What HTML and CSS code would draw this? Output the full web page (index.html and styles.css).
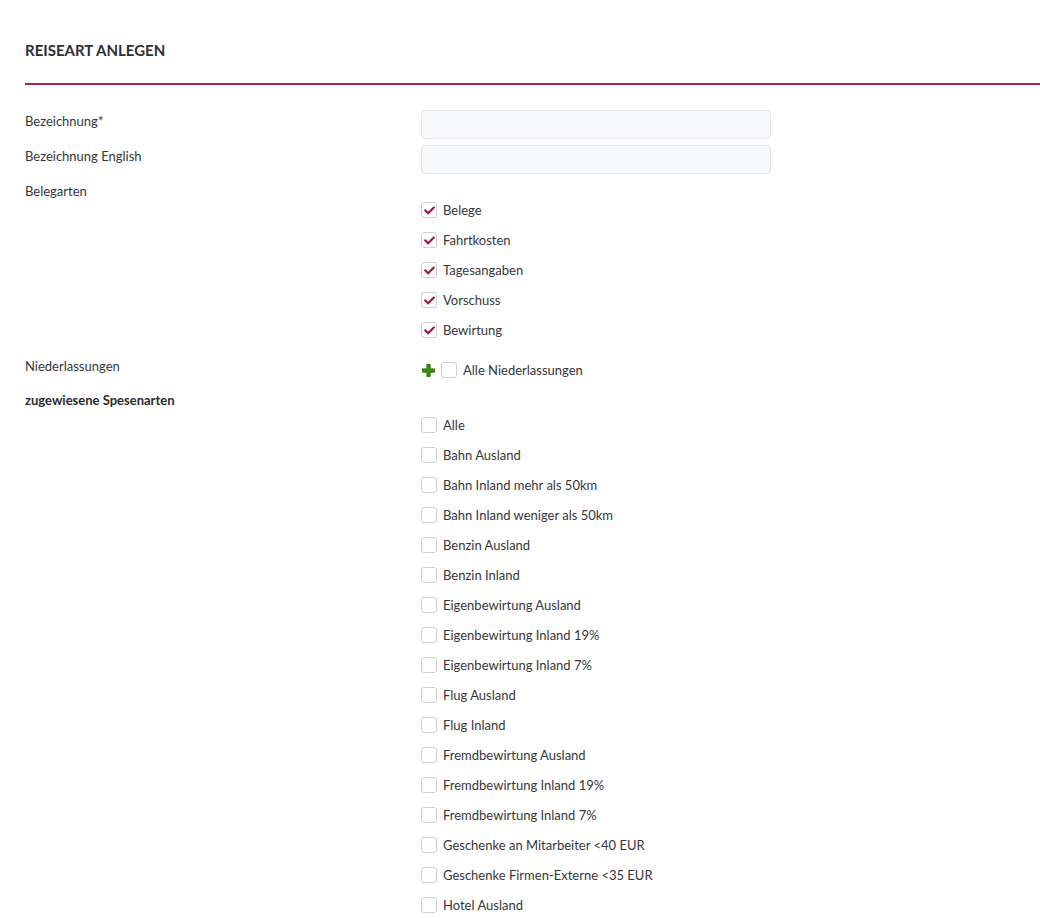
FILE: index.html
```html
<!DOCTYPE html>
<html lang="de">
<head>
<meta charset="utf-8">
<title>Reiseart anlegen</title>
<link rel="stylesheet" href="styles.css">
</head>
<body>
<div class="page">
  <header class="page-head">
    <h1 class="page-title">REISEART ANLEGEN</h1>
  </header>

  <form class="form">
    <div class="row">
      <label class="label">Bezeichnung*</label>
      <div class="field"><input class="input" type="text"></div>
    </div>
    <div class="row">
      <label class="label">Bezeichnung English</label>
      <div class="field"><input class="input" type="text"></div>
    </div>

    <div class="row row-group">
      <label class="label">Belegarten</label>
      <div class="field checks checks-belege">
        <div class="check"><span class="box checked"><svg viewBox="0 0 512 512"><path d="M173.9 439.4 7.5 273c-10-10-10-26.2 0-36.2l36.2-36.2c10-10 26.2-10 36.2 0L192 312.7 432.1 72.6c10-10 26.2-10 36.2 0l36.2 36.2c10 10 10 26.2 0 36.2L210.1 439.4c-10 10-26.2 10-36.2 0z"/></svg></span><span class="text">Belege</span></div>
        <div class="check"><span class="box checked"><svg viewBox="0 0 512 512"><path d="M173.9 439.4 7.5 273c-10-10-10-26.2 0-36.2l36.2-36.2c10-10 26.2-10 36.2 0L192 312.7 432.1 72.6c10-10 26.2-10 36.2 0l36.2 36.2c10 10 10 26.2 0 36.2L210.1 439.4c-10 10-26.2 10-36.2 0z"/></svg></span><span class="text">Fahrtkosten</span></div>
        <div class="check"><span class="box checked"><svg viewBox="0 0 512 512"><path d="M173.9 439.4 7.5 273c-10-10-10-26.2 0-36.2l36.2-36.2c10-10 26.2-10 36.2 0L192 312.7 432.1 72.6c10-10 26.2-10 36.2 0l36.2 36.2c10 10 10 26.2 0 36.2L210.1 439.4c-10 10-26.2 10-36.2 0z"/></svg></span><span class="text">Tagesangaben</span></div>
        <div class="check"><span class="box checked"><svg viewBox="0 0 512 512"><path d="M173.9 439.4 7.5 273c-10-10-10-26.2 0-36.2l36.2-36.2c10-10 26.2-10 36.2 0L192 312.7 432.1 72.6c10-10 26.2-10 36.2 0l36.2 36.2c10 10 10 26.2 0 36.2L210.1 439.4c-10 10-26.2 10-36.2 0z"/></svg></span><span class="text">Vorschuss</span></div>
        <div class="check"><span class="box checked"><svg viewBox="0 0 512 512"><path d="M173.9 439.4 7.5 273c-10-10-10-26.2 0-36.2l36.2-36.2c10-10 26.2-10 36.2 0L192 312.7 432.1 72.6c10-10 26.2-10 36.2 0l36.2 36.2c10 10 10 26.2 0 36.2L210.1 439.4c-10 10-26.2 10-36.2 0z"/></svg></span><span class="text">Bewirtung</span></div>
      </div>
    </div>

    <div class="row row-branch">
      <label class="label">Niederlassungen</label>
      <div class="field">
        <div class="check">
          <svg class="plus" viewBox="0 0 12 12"><path d="M4.5 0.5h3v4h4v3h-4v4h-3v-4h-4v-3h4z"/></svg>
          <span class="box"></span><span class="text">Alle Niederlassungen</span>
        </div>
      </div>
    </div>

    <div class="row row-group">
      <label class="label label-strong">zugewiesene Spesenarten</label>
      <div class="field checks checks-spesen">
        <div class="check"><span class="box"></span><span class="text">Alle</span></div>
        <div class="check"><span class="box"></span><span class="text">Bahn Ausland</span></div>
        <div class="check"><span class="box"></span><span class="text">Bahn Inland mehr als 50km</span></div>
        <div class="check"><span class="box"></span><span class="text">Bahn Inland weniger als 50km</span></div>
        <div class="check"><span class="box"></span><span class="text">Benzin Ausland</span></div>
        <div class="check"><span class="box"></span><span class="text">Benzin Inland</span></div>
        <div class="check"><span class="box"></span><span class="text">Eigenbewirtung Ausland</span></div>
        <div class="check"><span class="box"></span><span class="text">Eigenbewirtung Inland 19%</span></div>
        <div class="check"><span class="box"></span><span class="text">Eigenbewirtung Inland 7%</span></div>
        <div class="check"><span class="box"></span><span class="text">Flug Ausland</span></div>
        <div class="check"><span class="box"></span><span class="text">Flug Inland</span></div>
        <div class="check"><span class="box"></span><span class="text">Fremdbewirtung Ausland</span></div>
        <div class="check"><span class="box"></span><span class="text">Fremdbewirtung Inland 19%</span></div>
        <div class="check"><span class="box"></span><span class="text">Fremdbewirtung Inland 7%</span></div>
        <div class="check"><span class="box"></span><span class="text">Geschenke an Mitarbeiter &lt;40 EUR</span></div>
        <div class="check"><span class="box"></span><span class="text">Geschenke Firmen-Externe &lt;35 EUR</span></div>
        <div class="check"><span class="box"></span><span class="text">Hotel Ausland</span></div>
      </div>
    </div>
  </form>
</div>
</body>
</html>
```

FILE: styles.css
```css
* {
  box-sizing: border-box;
}

html, body {
  margin: 0;
  background: #ffffff;
}

body {
  font-family: Lato, "Liberation Sans", sans-serif;
  font-size: 13px;
  color: #36363b;
}

.page {
  padding-left: 25px;
}

.page-head {
  padding: 40px 0 23px;
  border-bottom: 2px solid #b01f4b;
}

.page-title {
  margin: 0;
  font-size: 15px;
  line-height: 20px;
  font-weight: 700;
  color: #2e2e33;
}

.form {
  padding-top: 25px;
}

.row {
  display: flex;
  align-items: flex-start;
  margin-bottom: 6px;
}

.label {
  flex: 0 0 396px;
  line-height: 22px;
}

.label-strong {
  font-weight: 700;
  color: #2a2a2f;
}

.field {
  flex: 0 0 350px;
}

.input {
  display: block;
  width: 350px;
  height: 29px;
  border: 1px solid #e4e6ea;
  border-radius: 4px;
  background: #f7f8fa;
  font: inherit;
}

/* the branch row sits a little apart from the groups around it */
.row-branch {
  margin-top: 10px;
  margin-bottom: 4px;
}

.checks-belege {
  padding-top: 15px;
}

.checks-spesen {
  padding-top: 21px;
}

.check {
  display: flex;
  align-items: center;
  height: 30px;
}

.box {
  flex: 0 0 16px;
  width: 16px;
  height: 16px;
  margin-right: 6px;
  border: 1px solid #cfcfd3;
  border-radius: 3px;
  background: #ffffff;
  display: flex;
  align-items: center;
  justify-content: center;
}

.box svg {
  width: 11px;
  height: 11px;
  fill: #a3173f;
}

.plus {
  width: 13px;
  height: 13px;
  margin: 0 6px 0 1px;
  fill: #3a9a00;
  stroke: #1e6500;
  stroke-width: 0.8;
}

.text {
  line-height: 16px;
}
```
